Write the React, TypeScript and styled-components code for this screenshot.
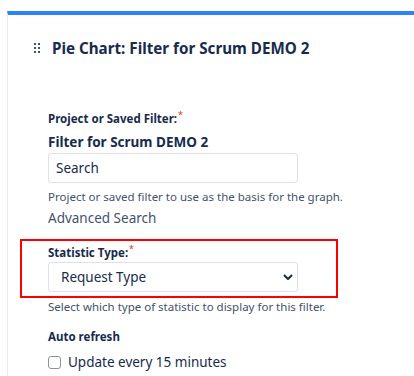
import React from "react";
import styled, { createGlobalStyle } from "styled-components";

const GlobalStyle = createGlobalStyle`
	body {
		margin: 0;
		background: #fff;
		font-family: "Noto Sans", "Open Sans", sans-serif;
		color: #172b4d;
	}
`;

export default function App() {
	return (
		<>
			<GlobalStyle />
			<Page>
				<Panel>
					<Header>
						<DragHandle>
							<svg width="6" height="10" viewBox="0 0 6 10">
								{[0, 4, 8].map((y) => (
									<React.Fragment key={y}>
										<rect x="0" y={y} width="2" height="2" fill="#42526e" />
										<rect x="4" y={y} width="2" height="2" fill="#42526e" />
									</React.Fragment>
								))}
							</svg>
						</DragHandle>
						<Title>Pie Chart: Filter for Scrum DEMO 2</Title>
					</Header>
					<Form>
						<Field>
							<Label>
								Project or Saved Filter:<Req>*</Req>
							</Label>
							<Selected>Filter for Scrum DEMO 2</Selected>
							<TextInput defaultValue="Search" />
							<Help $top={6}>Project or saved filter to use as the basis for the graph.</Help>
							<Link>Advanced Search</Link>
						</Field>
						<Highlight>
							<Label>
								Statistic Type:<Req>*</Req>
							</Label>
							<SelectBox>
								<span>Request Type</span>
								<svg width="10" height="7" viewBox="0 0 10 7">
									<path d="M1.5 1.5 L5 5 L8.5 1.5" stroke="#172b4d" strokeWidth="2" fill="none" strokeLinecap="round" strokeLinejoin="round" />
								</svg>
							</SelectBox>
						</Highlight>
						<Help $top={1}>Select which type of statistic to display for this filter.</Help>
						<Section>
							<Label>Auto refresh</Label>
							<CheckRow>
								<Check />
								<span>Update every 15 minutes</span>
							</CheckRow>
						</Section>
					</Form>
				</Panel>
			</Page>
		</>
	);
}

const Page = styled.div`
	padding: 11px 0 0 7px;
	height: 365px;
	overflow: hidden;
`;

const Panel = styled.div`
	border-top: 4px solid #2a84f6;
	border-left: 1px solid #ebecf0;
	height: 400px;
`;

const Header = styled.div`
	display: flex;
	align-items: center;
	padding: 21px 0 0 26px;
	gap: 12px;
`;

const DragHandle = styled.div`
	display: flex;
	align-items: center;
`;

const Title = styled.h2`
	margin: 0;
	font-size: 15.2px;
	font-weight: 700;
	color: #172b4d;
	line-height: 24px;
`;

const Form = styled.div`
	padding: 51px 0 0 40px;
	display: flex;
	flex-direction: column;
`;

const Field = styled.div`
	display: flex;
	flex-direction: column;
	align-items: flex-start;
`;

const Label = styled.div`
	font-size: 11.5px;
	font-weight: 700;
	color: #172b4d;
	line-height: 16px;
`;

const Req = styled.span`
	color: #de350b;
	font-size: 9px;
	font-weight: 400;
	vertical-align: top;
	position: relative;
	top: -4px;
	margin-left: 1px;
`;

const Selected = styled.div`
	font-size: 13.5px;
	font-weight: 700;
	line-height: 20px;
	margin-top: 5px;
`;

const TextInput = styled.input`
	box-sizing: border-box;
	width: 250px;
	height: 30px;
	margin-top: 1px;
	border: 1px solid #dfe1e6;
	border-radius: 3px;
	padding: 0 7px;
	font: inherit;
	font-size: 13.5px;
	color: #172b4d;
	outline: none;
`;

const Help = styled.div<{ $top: number }>`
	font-size: 11.5px;
	color: #42526e;
	line-height: 16px;
	margin-top: ${(p) => p.$top}px;
`;

const Link = styled.div`
	font-size: 13.5px;
	color: #42526e;
	line-height: 20px;
	margin-top: 3px;
`;

const Highlight = styled.div`
	margin: 11px 0 0 -28px;
	width: 318px;
	box-sizing: border-box;
	border: 2px solid #ff0000;
	padding: 4px 0 4px 26px;
`;

const SelectBox = styled.div`
	box-sizing: border-box;
	width: 250px;
	height: 30px;
	margin-top: 1px;
	border: 1px solid #dfe1e6;
	border-radius: 3px;
	display: flex;
	align-items: center;
	justify-content: space-between;
	padding: 0 4px 0 12px;
	font-size: 13.5px;
	color: #172b4d;
`;

const Section = styled.div`
	margin-top: 14px;
	display: flex;
	flex-direction: column;
	gap: 7px;
`;

const CheckRow = styled.label`
	display: flex;
	align-items: center;
	gap: 7px;
	font-size: 13.5px;
	line-height: 20px;
	color: #172b4d;
`;

const Check = styled.span`
	width: 11px;
	height: 11px;
	border: 1px solid #8993a4;
	border-radius: 3px;
	display: inline-block;
`;
